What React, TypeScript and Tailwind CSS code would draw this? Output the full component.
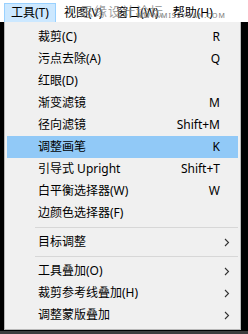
import React from 'react';

type Item =
    | { kind: 'item'; label: string; shortcut?: string; sub?: boolean; active?: boolean }
    | { kind: 'sep' };

const items: Item[] = [
    { kind: 'item', label: '裁剪(C)', shortcut: 'R' },
    { kind: 'item', label: '污点去除(A)', shortcut: 'Q' },
    { kind: 'item', label: '红眼(D)' },
    { kind: 'item', label: '渐变滤镜', shortcut: 'M' },
    { kind: 'item', label: '径向滤镜', shortcut: 'Shift+M' },
    { kind: 'item', label: '调整画笔', shortcut: 'K', active: true },
    { kind: 'item', label: '引导式 Upright', shortcut: 'Shift+T' },
    { kind: 'item', label: '白平衡选择器(W)', shortcut: 'W' },
    { kind: 'item', label: '边颜色选择器(F)' },
    { kind: 'sep' },
    { kind: 'item', label: '目标调整', sub: true },
    { kind: 'sep' },
    { kind: 'item', label: '工具叠加(O)', sub: true },
    { kind: 'item', label: '裁剪参考线叠加(H)', sub: true },
    { kind: 'item', label: '调整蒙版叠加', sub: true },
];

const Chevron = () => (
    <svg width="6" height="9" viewBox="0 0 6 9" className="text-[#333]">
        <path d="M1 1 L4.5 4.5 L1 8" fill="none" stroke="currentColor" strokeWidth="1.1" />
    </svg>
);

export default function App() {
    return (
        <div
            className="w-[248px] h-[334px] overflow-hidden bg-black flex flex-col text-[12px] text-black"
            style={{ fontFamily: "'Noto Sans', 'Noto Sans CJK SC', sans-serif" }}
        >
            {/* Menu bar */}
            <div className="relative h-[22px] bg-white flex items-end pl-[4px] shrink-0">
                <div className="h-[19px] px-[6px] flex items-center bg-[#cce8ff] border border-b-0 border-[#99d1ff]">
                    工具(T)
                </div>
                <div className="h-[19px] flex items-center ml-[8px]">视图(V)</div>
                <div className="h-[19px] flex items-center ml-[14px]">窗口(W)</div>
                <div className="h-[19px] flex items-center ml-[14px]">帮助(H)</div>

                {/* Watermark */}
                <div className="absolute left-[80px] top-[2px] text-[13px] text-[#8a8a8a]/80 tracking-[1px]">
                    思缘设计论坛
                </div>
                <div className="absolute left-[136px] top-[12px] text-[7px] leading-none text-[#7a7a7a] tracking-[1px]">
                    WWW.MISSYUAN.COM
                </div>
            </div>

            {/* Dropdown */}
            <div className="flex-1 flex">
                <div className="ml-[4px] w-[237px] h-[308px] bg-[#f0f0f0] border border-t-0 border-[#b8b8b8] shadow-[2px_2px_3px_rgba(0,0,0,0.4)] px-[2px] pt-[4px] flex flex-col">
                    {items.map((it, i) =>
                        it.kind === 'sep' ? (
                            <div key={i} className="h-[7px] flex items-center pl-[28px]">
                                <div className="h-px w-full bg-[#d7d7d7]" />
                            </div>
                        ) : (
                            <div
                                key={i}
                                className={`h-[22px] flex items-center pl-[31px] pr-[8px] ${it.active ? 'bg-[#91c9f7]' : ''}`}
                            >
                                <span className="flex-1 whitespace-nowrap">{it.label}</span>
                                {it.shortcut && <span className="mr-[10px] whitespace-nowrap">{it.shortcut}</span>}
                                {it.sub && <Chevron />}
                            </div>
                        )
                    )}
                </div>
            </div>
            <div className="h-[3px] bg-[#3c3c3c] shrink-0" />
        </div>
    );
}
